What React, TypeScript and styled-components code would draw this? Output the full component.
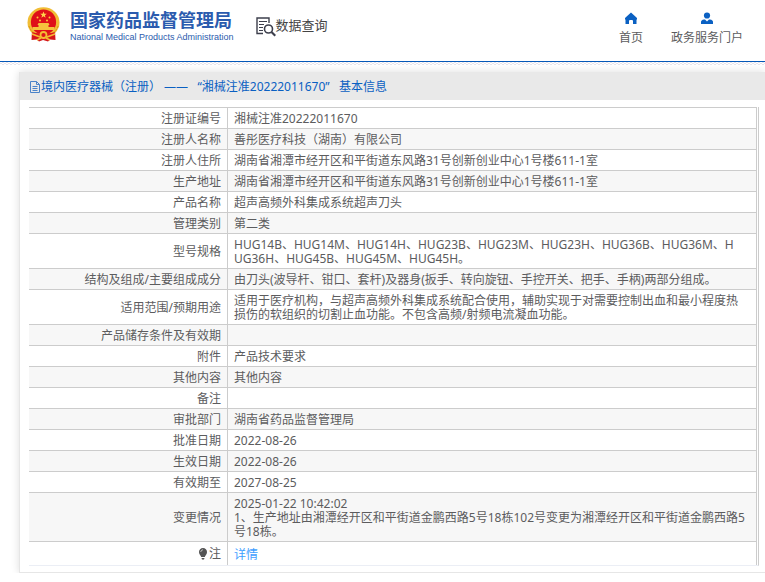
import React from "react";
import styled, { createGlobalStyle } from "styled-components";

const GlobalStyle = createGlobalStyle`
  * { box-sizing: border-box; }
  body {
    margin: 0;
    background: #fff;
    color: #5c5c5e;
    font-family: "Noto Sans", "Noto Sans CJK SC", sans-serif;
    font-size: 12px;
    line-height: 14px;
    overflow-x: hidden;
  }
`;

const Header = styled.header`
  display: flex;
  align-items: flex-start;
  height: 62px;
  padding: 7px 22px 0 27px;
  border-bottom: 1px solid #0558b8;
`;

const Hatch = styled.div`
  height: 3px;
  background: repeating-conic-gradient(#e8e5ec 0 25%, #fff 0 50%) 0 0 / 4px 2px;
`;

const Brand = styled.a`
  display: flex;
  gap: 10px;
  color: #2b5bae;
  text-decoration: none;
`;

const BrandText = styled.span`
  display: flex;
  flex-direction: column;
`;

const BrandName = styled.span`
  font-family: "Noto Sans CJK SC", sans-serif;
  font-size: 18px;
  font-weight: 700;
  line-height: 24px;
  white-space: nowrap;
`;

const BrandSub = styled.span`
  font-family: "Liberation Sans", sans-serif;
  font-size: 9px;
  line-height: 12px;
  white-space: nowrap;
`;

const Section = styled.h1`
  display: flex;
  align-items: flex-start;
  margin: 9px 0 0 22px;
  color: #444;
  font-size: 13px;
  font-weight: 400;
  line-height: 18px;
  white-space: nowrap;
`;

const Nav = styled.nav`
  display: flex;
  gap: 28px;
  margin: 5px 0 0 auto;
`;

const NavLink = styled.a`
  display: flex;
  flex-direction: column;
  align-items: center;
  gap: 5px;
  color: #5c5c5e;
  line-height: 16px;
  text-decoration: none;
  white-space: nowrap;
`;

const Card = styled.main`
  margin: 7px 0 0 19px;
  padding-bottom: 6px;
  background: #fff;
  border-left: 1px solid #e6e6e6;
  border-bottom: 1px solid #e6e6e6;
  box-shadow: 0 0 8px #ddd;
`;

const CardTitle = styled.h2`
  display: flex;
  align-items: center;
  gap: 1px;
  height: 28px;
  margin: 0 0 7px;
  padding: 2px 0 0 10px;
  background: #e9e9e9;
  color: #0a60c2;
  font-size: 12px;
  font-weight: 400;
  white-space: pre;
`;

const TableFrame = styled.div`
  margin: 0 6px 0 9px;
  padding-right: 1px;
  border-right: 1px solid #ccc;
  border-bottom: 1px solid #ebeef5;
`;

const Table = styled.table`
  width: 100%;
  table-layout: fixed;
  border-spacing: 0;
  border-collapse: separate;
`;

const Row = styled.tr`
  &:nth-child(even) { background: #f7f7f7; }
  &:last-child > * { padding-top: 5px; }
`;

const Label = styled.th`
  width: 199px;
  padding: 4px 6px 2px;
  border-top: 1px solid #ccc;
  border-right: 1px solid #ccc;
  font-weight: 400;
  text-align: right;
`;

const Value = styled.td`
  height: 21px;
  padding: 4px 9px 2px 6px;
  border-top: 1px solid #ccc;
  border-right: 1px solid #ccc;
  white-space: pre-line;
  word-break: break-all;
`;

const DetailLink = styled.a`
  color: #409eff;
  text-decoration: none;
`;

const NoteLabel = styled.span`
  display: inline-flex;
  align-items: center;
  gap: 1px;
`;

const Emblem = () => (
  <svg width="33" height="35" viewBox="0 0 33 35" aria-hidden="true">
    <path d="M5 24 4.500 33l5.500-.5 2 2 4-1.500 5 1.500 2-2 5.500.5L28 24z" fill="#d5161c" />
    <ellipse cx="16.500" cy="15.500" rx="16" ry="15.200" fill="#f1bd35" />
    <path d="M2 19a15 14 0 0 0 29 0" fill="none" stroke="#d99618" strokeDasharray="2 1" />
    <circle cx="16.500" cy="15" r="12.600" fill="#df1019" />
    <path d="m16.500 4.500.9 2.200 2.400.1-1.900 1.500.7 2.400-2.100-1.400-2.100 1.400.7-2.400-1.900-1.500 2.400-.1z" fill="#ffd34c" />
    <g fill="#ffc83a"><circle cx="10.500" cy="10.500" r="1" /><circle cx="13" cy="13.500" r="1" /><circle cx="20" cy="13.500" r="1" /><circle cx="22.500" cy="10.500" r="1" /></g>
    <path d="M11.500 16h10l1 2h-1v2h6v3h-22v-3h6v-2h-1z" fill="#f6c23d" />
    <path d="M5 25q6 2 11.500 1Q22 27 28 25l-2 5H7z" fill="#dc151b" />
    <circle cx="16.500" cy="28" r="3" fill="#dc151b" stroke="#f3bd32" strokeWidth="1.800" />
    <path d="m5 27 8 3m15-3-8 3M10 33l4-2m9 2-4-2" stroke="#f3bd32" strokeWidth="1.500" />
  </svg>
);

const SearchDocIcon = () => (
  <svg width="20" height="22" viewBox="0 0 20 22" fill="none" stroke="#3d3f4c" aria-hidden="true">
    <path d="M7 17.500H1V2h12v5" strokeWidth="1.400" />
    <path d="M3 5.500h8M3 8.500h5M3 11.500h4M3 14.500h4" />
    <circle cx="12.500" cy="13" r="4" strokeWidth="1.600" />
    <path d="m15.500 16 3.800 3.800" strokeWidth="2.200" />
  </svg>
);

const HomeIcon = () => (
  <svg width="14" height="13" viewBox="0 0 14 13" fill="#0a60c2" aria-hidden="true">
    <path d="M7 .500 13 6v1.500h-.500V12H9V9q0-1-1-1H6Q5 8 5 9v3H1.500V7.500H1V6z" />
  </svg>
);

const UserIcon = () => (
  <svg width="14" height="13" viewBox="0 0 14 13" fill="#0a60c2" aria-hidden="true">
    <circle cx="7" cy="3.500" r="3.100" />
    <path d="M1 12V10q0-2 3-2.500h1L7 9.500l2-2h1q3 .5 3 2.500v2z" />
  </svg>
);

const DocIcon = () => (
  <svg width="10" height="12" viewBox="0 0 10 12" fill="none" stroke="#4b83c9" aria-hidden="true">
    <path d="M.5.500h6l3 3v8h-9zM6.500.500v3h3M2.500 5.500h5M2.500 7.500h5M2.500 9.500h5" />
  </svg>
);

const BulbIcon = () => (
  <svg width="10" height="12" viewBox="0 0 10 12" aria-hidden="true">
    <path d="M5 0a4 4 0 0 1 4 4.200C9 6.500 7 7.500 6.800 9H3.200C3 7.500 1 6.500 1 4.200A4 4 0 0 1 5 0zM3.500 10h3L6 11.500H4z" fill="#555" />
    <path d="M2.700 4Q3 2 5 1.700" fill="none" stroke="#ddd" strokeWidth=".8" />
  </svg>
);

const address = "湖南省湘潭市经开区和平街道东风路31号创新创业中心1号楼611-1室";

const records: [string, string][] = [
  ["注册证编号", "湘械注准20222011670"],
  ["注册人名称", "善彤医疗科技（湖南）有限公司"],
  ["注册人住所", address],
  ["生产地址", address],
  ["产品名称", "超声高频外科集成系统超声刀头"],
  ["管理类别", "第二类"],
  ["型号规格", "HUG14B、HUG14M、HUG14H、HUG23B、HUG23M、HUG23H、HUG36B、HUG36M、H\nUG36H、HUG45B、HUG45M、HUG45H。"],
  ["结构及组成/主要组成成分", "由刀头(波导杆、钳口、套杆)及器身(扳手、转向旋钮、手控开关、把手、手柄)两部分组成。"],
  ["适用范围/预期用途", "适用于医疗机构，与超声高频外科集成系统配合使用，辅助实现于对需要控制出血和最小程度热损伤的软组织的切割止血功能。不包含高频/射频电流凝血功能。"],
  ["产品储存条件及有效期", ""],
  ["附件", "产品技术要求"],
  ["其他内容", "其他内容"],
  ["备注", ""],
  ["审批部门", "湖南省药品监督管理局"],
  ["批准日期", "2022-08-26"],
  ["生效日期", "2022-08-26"],
  ["有效期至", "2027-08-25"],
  ["变更情况", "2025-01-22 10:42:02\n1、生产地址由湘潭经开区和平街道金鹏西路5号18栋102号变更为湘潭经开区和平街道金鹏西路5号18栋。"],
];

export default function App() {
  return (
    <>
      <GlobalStyle />
      <Header>
        <Brand href="#">
          <Emblem />
          <BrandText>
            <BrandName>国家药品监督管理局</BrandName>
            <BrandSub>National Medical Products Administration</BrandSub>
          </BrandText>
        </Brand>
        <Section><SearchDocIcon />数据查询</Section>
        <Nav>
          <NavLink href="#"><HomeIcon />首页</NavLink>
          <NavLink href="#"><UserIcon />政务服务门户</NavLink>
        </Nav>
      </Header>
      <Hatch />
      <Card>
        <CardTitle>
          <DocIcon />
          <span>{"境内医疗器械（注册） ——   “湘械注准20222011670”   基本信息"}</span>
        </CardTitle>
        <TableFrame>
          <Table>
            <tbody>
              {records.map(([label, value]) => (
                <Row key={label}>
                  <Label scope="row">{label}</Label>
                  <Value>{value}</Value>
                </Row>
              ))}
              <Row>
                <Label scope="row"><NoteLabel><BulbIcon />注</NoteLabel></Label>
                <Value><DetailLink href="#">详情</DetailLink></Value>
              </Row>
            </tbody>
          </Table>
        </TableFrame>
      </Card>
    </>
  );
}
